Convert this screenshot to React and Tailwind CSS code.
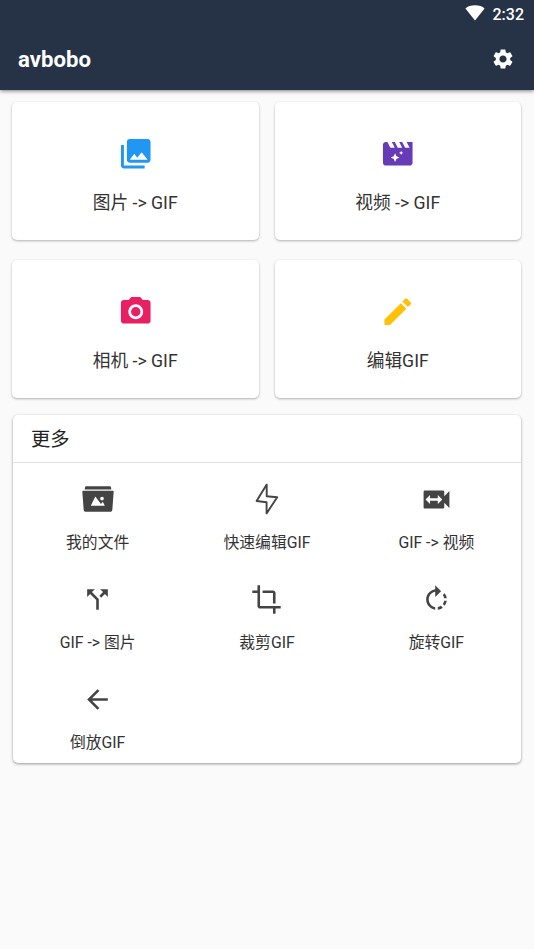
import {
  MdSettings,
  MdPhotoLibrary,
  MdCameraAlt,
  MdEdit,
  MdCrop,
  MdCallSplit,
  MdRotateRight,
  MdArrowBack,
} from "react-icons/md";

function WifiIcon() {
  return (
    <svg width="20" height="16" viewBox="0 0 20 16" fill="#fff">
      <path d="M10 15.6 0.4 3.4C2.6 1.4 6 0.3 10 0.3s7.4 1.1 9.6 3.1z" />
    </svg>
  );
}

function MovieIcon() {
  return (
    <svg width="35.5" height="35.5" viewBox="0 0 24 24">
      <path
        fill="#673ab7"
        d="M18 4l2 4h-3l-2-4h-2l2 4h-3l-2-4H8l2 4H7L5 4H4c-1.100 0-2 .9-2 2v12c0 1.100.9 2 2 2h16c1.100 0 2-.9 2-2V4h-4z"
      />
      <path
        fill="#fff"
        d="M10.200 11.700l.9 2 2 .9-2 .9-.9 2-.9-2-2-.9 2-.9zM14.300 10l.45 1 1 .45-1 .45-.45 1-.45-1-1-.45 1-.45z"
      />
    </svg>
  );
}

function FilesIcon() {
  return (
    <svg width="32" height="32" viewBox="0 0 32 32" fill="#444">
      <path d="M4.4 3.2h23.2c.9 0 1.3.5 1.4 1.3l.3 1.9H2.700L3 4.500c.1-.8.5-1.300 1.400-1.300z" />
      <path
        fillRule="evenodd"
        d="M.3 8.600q0-.8.9-.8h29.600q.9 0 .9.8l-1.400 18.500q-.1 1.600-1.600 1.600H3.300q-1.500 0-1.600-1.600zM8.800 22.800h14l-2-4.100-1.800 2.400L13.300 13.600zM20 13.700a1.800 1.800 0 1 0 .01 0z"
      />
    </svg>
  );
}

function BoltIcon() {
  return (
    <svg width="32" height="32" viewBox="0 0 32 32" fill="none" stroke="#444" strokeWidth="1.9" strokeLinejoin="round">
      <path d="M15.700 1.600 5.600 18l10 1.200v11.200L26.200 14.300l-10.500-1z" />
    </svg>
  );
}

function SwitchVideoIcon() {
  return (
    <svg width="31" height="31" viewBox="0 0 24 24" fill="#444">
      <path d="M18 9.500V6c0-.55-.45-1-1-1H3c-.55 0-1 .45-1 1v12c0 .55.45 1 1 1h14c.55 0 1-.45 1-1v-3.500l4 4v-13l-4 4zm-5 6V13H7v2.500L3.500 12 7 8.500V11h6V8.500l3.500 3.500-3.500 3.500z" />
    </svg>
  );
}

const mains = [
  { label: "图片 -> GIF", icon: <MdPhotoLibrary size={35.5} color="#2196f3" /> },
  { label: "视频 -> GIF", icon: <MovieIcon /> },
  { label: "相机 -> GIF", icon: <MdCameraAlt size={35.5} color="#e91e63" /> },
  { label: "编辑GIF", icon: <MdEdit size={35.5} color="#ffc107" /> },
];

const tools = [
  { label: "我的文件", icon: <FilesIcon /> },
  { label: "快速编辑GIF", icon: <BoltIcon /> },
  { label: "GIF -> 视频", icon: <SwitchVideoIcon /> },
  { label: "GIF -> 图片", icon: <MdCallSplit size={31} color="#444" /> },
  { label: "裁剪GIF", icon: <MdCrop size={31} color="#444" /> },
  { label: "旋转GIF", icon: <MdRotateRight size={31} color="#444" /> },
  { label: "倒放GIF", icon: <MdArrowBack size={31} color="#444" /> },
];

export default function App() {
  return (
    <div className="h-[949px] w-[534px] overflow-hidden bg-[#fafafa] font-[Roboto,'Noto_Sans_CJK_SC',sans-serif] text-[#333]">
      <header className="h-[89.5px] bg-[#263246] text-white shadow-[0_1px_4px_rgba(0,0,0,0.5)]">
        <div className="flex h-[29px] items-center justify-end gap-2 pr-[10px]">
          <div className="-mt-[3px]">
            <WifiIcon />
          </div>
          <span className="text-[16px] leading-[29px] font-medium">2:32</span>
        </div>
        <div className="flex h-[60px] items-center justify-between pr-[19px] pl-[18px]">
          <h1 className="text-[22.2px] leading-none font-bold">avbobo</h1>
          <MdSettings size={24} />
        </div>
      </header>
      <main className="pt-[12.5px] pr-[13px] pl-3">
        <div className="grid grid-cols-2 gap-x-4 gap-y-5">
          {mains.map((m) => (
            <button
              key={m.label}
              className="flex h-[138px] flex-col items-center rounded-[5px] bg-white pt-[34px] shadow-[0_1px_2.5px_rgba(0,0,0,0.3)]"
            >
              {m.icon}
              <span className="mt-[17.5px] text-[17.7px] leading-7">{m.label}</span>
            </button>
          ))}
        </div>
        <section className="mt-[17px] ml-px h-[348px] rounded-[5px] bg-white shadow-[0_1px_3px_rgba(0,0,0,0.4)]">
          <h2 className="h-12 border-b border-[#e2e2e2] pl-[18px] text-[19.3px] leading-[49px] text-[#222]">更多</h2>
          <div className="grid grid-cols-3">
            {tools.map((t) => (
              <button key={t.label} className="flex h-[100px] flex-col items-center pt-5">
                <div className="flex h-8 items-center">{t.icon}</div>
                <span className="mt-4 text-[15.8px] leading-6">{t.label}</span>
              </button>
            ))}
          </div>
        </section>
      </main>
    </div>
  );
}
